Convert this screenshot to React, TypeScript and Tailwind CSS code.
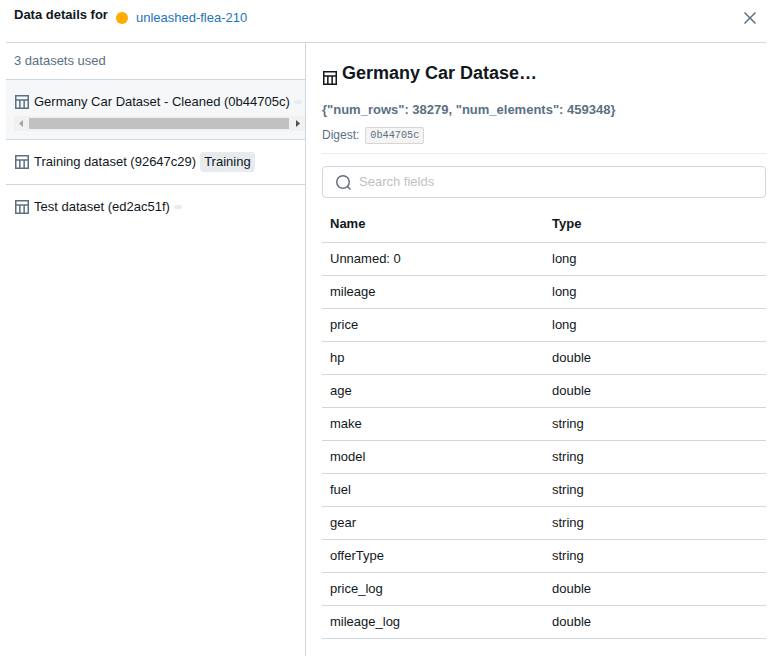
import React from "react";

const fields: [string, string][] = [
  ["Unnamed: 0", "long"],
  ["mileage", "long"],
  ["price", "long"],
  ["hp", "double"],
  ["age", "double"],
  ["make", "string"],
  ["model", "string"],
  ["fuel", "string"],
  ["gear", "string"],
  ["offerType", "string"],
  ["price_log", "double"],
  ["mileage_log", "double"],
];

function TableIcon({ className = "" }: { className?: string }) {
  return (
    <svg viewBox="0 0 16 16" className={`size-4 shrink-0 ${className}`} fill="none" stroke="currentColor" strokeWidth="1.5">
      <path d="M1.750 1.750h12.500v12.500H1.750zM1.750 6h12.500M5.850 6v8M10.150 6v8" />
    </svg>
  );
}

function EmptyTag() {
  return <span className="h-1 w-2 shrink-0 rounded-[2px] bg-[#e8ebef]" />;
}

export default function App() {
  return (
    <div className="flex h-[656px] w-[777px] flex-col overflow-hidden bg-white pl-1.5 pr-[11px] font-['Liberation_Sans',Arial,sans-serif] text-[13px] leading-5 text-[#11171c]">
      <header className="flex h-[43px] shrink-0 items-start border-b border-[#cdd8e2] pl-2">
        <h1 className="mt-[5px] font-bold">Data details for</h1>
        <span className="ml-2 mt-3 size-3 rounded-full bg-[#ffab00]" />
        <a className="ml-2 mt-2 text-[#2374bb]">unleashed-flea-210</a>
        <svg viewBox="0 0 16 16" className="ml-auto mr-2 mt-2.5 size-4 text-[#5b7083]" fill="none" stroke="currentColor" strokeWidth="1.5">
          <path d="M2.5 2.5l11 11M13.5 2.5l-11 11" />
        </svg>
      </header>
      <div className="flex min-h-0 flex-1">
        <aside className="flex w-[300px] shrink-0 flex-col border-r border-[#cdd8e2]">
          <div className="h-[37px] shrink-0 border-b border-[#cdd8e2] pl-2 pt-2 text-[#5b7083]">3 datasets used</div>
          <div className="h-[60px] shrink-0 border-b border-[#cdd8e2] bg-[#f5f7f9] pl-2 pt-3">
            <div className="flex h-5 items-center gap-1 whitespace-nowrap">
              <TableIcon className="text-[#5b7083]" />
              <span>Germany Car Dataset - Cleaned (0b44705c)</span>
              <EmptyTag />
            </div>
            <div className="mt-1 flex h-[15px] items-center bg-[#f1f1f1]">
              <svg viewBox="0 0 15 15" className="size-[15px]" fill="#a3a3a3">
                <path d="M9 4v7L5 7.500z" />
              </svg>
              <div className="h-[11px] w-[260px] bg-[#c1c1c1]" />
              <svg viewBox="0 0 15 15" className="size-[15px]" fill="#505050">
                <path d="M7 4v7l4-3.500z" />
              </svg>
            </div>
          </div>
          <div className="flex h-[45px] shrink-0 items-center gap-1 border-b border-[#cdd8e2] pl-2">
            <TableIcon className="text-[#5b7083]" />
            <span>Training dataset (92647c29)</span>
            <span className="h-5 rounded bg-[#e7ebef] px-1">Training</span>
          </div>
          <div className="flex h-11 shrink-0 items-center gap-1 pl-2">
            <TableIcon className="text-[#5b7083]" />
            <span>Test dataset (ed2ac51f)</span>
            <EmptyTag />
          </div>
        </aside>
        <main className="flex min-w-0 flex-1 flex-col pl-4">
          <div className="mt-4 flex h-7 shrink-0 gap-1">
            <TableIcon className="mt-[11px]" />
            <h2 className="text-lg font-bold leading-7">Germany Car Datase…</h2>
          </div>
          <div className="mt-[13px] font-bold text-[#5b7083]">{'{"num_rows": 38279, "num_elements": 459348}'}</div>
          <div className="mt-[5px] flex h-5 items-center text-xs text-[#5b7083]">
            Digest:
            <code className="ml-1.5 mt-px h-[17px] rounded-[2px] border border-[#d6d6d6] bg-[#f4f4f4] px-1 font-['Liberation_Mono',monospace] text-[10.200px] leading-[15px]">0b44705c</code>
          </div>
          <div className="mt-2 border-t border-[#ebebeb]" />
          <label className="mt-3 flex h-8 shrink-0 items-center rounded border border-[#cdd8e2] pl-3">
            <svg viewBox="0 0 16 16" className="size-4 text-[#5b7083]" fill="none" stroke="currentColor" strokeWidth="1.500">
              <circle cx="8" cy="8" r="6.250" />
              <path d="M12.500 12.500l3 3" />
            </svg>
            <span className="ml-2 text-[#bfbfbf]">Search fields</span>
          </label>
          <div className="mt-2 flex h-[37px] shrink-0 items-center border-b border-[#cdd8e2] pl-2 font-bold">
            <span className="w-[222px]">Name</span>
            <span>Type</span>
          </div>
          {fields.map(([name, type]) => (
            <div key={name} className="flex h-[33px] shrink-0 items-center border-b border-[#cdd8e2] pl-2">
              <span className="w-[222px]">{name}</span>
              <span>{type}</span>
            </div>
          ))}
        </main>
      </div>
    </div>
  );
}
